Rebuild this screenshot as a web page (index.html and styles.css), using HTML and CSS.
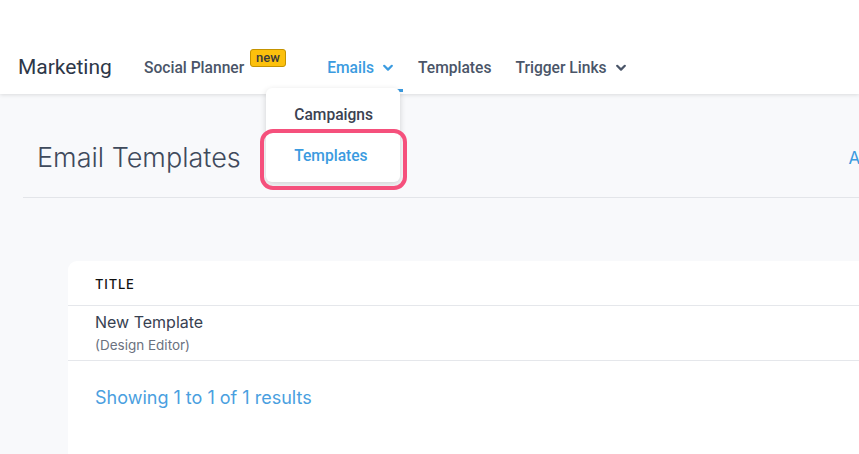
FILE: index.html
```html
<!DOCTYPE html>
<html>
<head>
<meta charset="utf-8">
<link rel="stylesheet" href="styles.css">
</head>
<body>
<header class="topbar">
  <div class="brand">Marketing</div>
  <nav class="nav">
    <div class="nav-item social">Social Planner<span class="badge">new</span></div>
    <div class="nav-item emails active">Emails
      <svg class="chev" viewBox="0 0 10 8" width="10" height="8"><path d="M1.2 1.8 L5 5.6 L8.8 1.8" fill="none" stroke="currentColor" stroke-width="2.2" stroke-linecap="round" stroke-linejoin="round"/></svg>
      <span class="underline"></span>
      <div class="dropdown">
        <div class="dd-item">Campaigns</div>
        <div class="dd-item dd-active">Templates</div>
      </div>
      <div class="highlight"></div>
    </div>
    <div class="nav-item tpl">Templates</div>
    <div class="nav-item">Trigger Links
      <svg class="chev" viewBox="0 0 10 8" width="10" height="8"><path d="M1.2 1.8 L5 5.6 L8.8 1.8" fill="none" stroke="currentColor" stroke-width="2.2" stroke-linecap="round" stroke-linejoin="round"/></svg>
    </div>
  </nav>
</header>
<main class="main">
  <div class="title-row">
    <h1 class="page-title">Email Templates</h1>
    <span class="add-link">Add</span>
  </div>
  <section class="card">
    <div class="card-head">TITLE</div>
    <div class="row">
      <div class="row-title">New Template</div>
      <div class="row-sub">(Design Editor)</div>
    </div>
    <div class="results">Showing 1 to 1 of 1 results</div>
  </section>
</main>
</body>
</html>
```

FILE: styles.css
```css
html, body {
  margin: 0;
  padding: 0;
}
body {
  width: 859px;
  height: 454px;
  overflow: hidden;
  background: #f8f9fb;
  font-family: "Roboto", "Noto Sans", sans-serif;
}
.topbar {
  height: 94px;
  background: #ffffff;
  box-shadow: 0 1px 4px rgba(0, 0, 0, 0.12);
  display: flex;
  align-items: flex-start;
  box-sizing: border-box;
  padding-top: 54px;
  padding-left: 18px;
  position: relative;
  z-index: 2;
}
.brand {
  font-size: 21px;
  font-weight: 400;
  color: #2d3748;
  line-height: 26px;
  width: 126px;
  flex: none;
}
.nav {
  display: flex;
  align-items: flex-start;
}
.nav-item {
  font-size: 15.6px;
  font-weight: 500;
  color: #4a5568;
  line-height: 28px;
  margin-right: 27px;
  position: relative;
  display: flex;
  align-items: center;
}
.social {
  margin-right: 83px;
}
.tpl {
  margin-right: 24px;
}
.badge {
  position: absolute;
  left: 106px;
  top: -5px;
  font-size: 13px;
  font-weight: 500;
  line-height: 15px;
  padding: 0 5px 1px 5px;
  background: #fcc00c;
  border: 1px solid #c49300;
  border-radius: 3px;
  color: #3a3a3a;
}
.emails {
  color: #3b9be0;
  margin-right: 25px;
}
.chev {
  margin-left: 9px;
  margin-top: -1px;
}
.underline {
  position: absolute;
  left: 0;
  right: -10px;
  top: 35px;
  height: 3px;
  background: #3b9be0;
}
.dropdown {
  position: absolute;
  left: -61px;
  top: 34px;
  width: 134px;
  background: #ffffff;
  border-radius: 6px;
  box-shadow: 0 2px 6px rgba(0, 0, 0, 0.16);
  padding: 7px 0 5px;
  z-index: 3;
}
.dd-item {
  font-size: 15.6px;
  font-weight: 500;
  color: #3b4252;
  line-height: 20px;
  padding: 10px 0 11px 28px;
}
.dd-active {
  color: #3b9be0;
}
.highlight {
  position: absolute;
  left: -67px;
  top: 75px;
  width: 139px;
  height: 53px;
  border: 4px solid #f5507c;
  border-radius: 13px;
  z-index: 4;
}
.main {
  padding: 0 0 0 23px;
  font-family: "Inter", "Noto Sans", sans-serif;
}
.title-row {
  height: 104px;
  border-bottom: 1px solid #e3e5e9;
  display: flex;
  align-items: center;
  justify-content: space-between;
  box-sizing: border-box;
  padding-top: 24px;
  overflow: hidden;
}
.page-title {
  margin: 0 0 0 14px;
  font-size: 27px;
  font-weight: 300;
  color: #3f4a5c;
  line-height: 32px;
}
.add-link {
  font-size: 17px;
  color: #3b9be0;
  margin-right: -22px;
  white-space: nowrap;
}
.card {
  margin: 63px 0 0 45px;
  background: #ffffff;
  border-radius: 9px 0 0 0;
  height: 200px;
}
.card-head {
  height: 45px;
  box-sizing: border-box;
  padding: 15px 0 0 27px;
  font-size: 13px;
  font-weight: 500;
  letter-spacing: 0.8px;
  color: #111111;
  border-bottom: 1px solid #e5e7eb;
}
.row {
  height: 55px;
  box-sizing: border-box;
  padding: 6px 0 0 27px;
  border-bottom: 1px solid #e5e7eb;
}
.row-title {
  font-size: 16px;
  color: #374151;
  line-height: 21px;
}
.row-sub {
  font-size: 13.5px;
  color: #6b7280;
  line-height: 18px;
  margin-top: 3px;
}
.results {
  padding: 26px 0 0 27px;
  font-size: 18px;
  color: #4a9fe0;
  line-height: 22px;
}
```
